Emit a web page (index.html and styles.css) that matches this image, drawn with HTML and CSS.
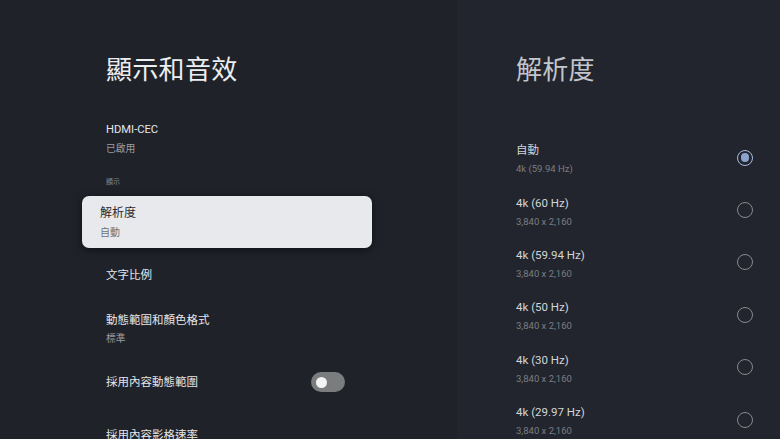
FILE: index.html
```html
<!DOCTYPE html>
<html lang="zh-Hant">
<head>
<meta charset="utf-8">
<title>顯示和音效</title>
<link rel="stylesheet" href="styles.css">
</head>
<body>
<div class="screen">
  <section class="left">
    <h1 class="title">顯示和音效</h1>
    <div class="item hdmi">
      <div class="item-title latin">HDMI-CEC</div>
      <div class="item-sub">已啟用</div>
    </div>
    <div class="header">顯示</div>
    <div class="card">
      <div class="card-title">解析度</div>
      <div class="card-sub">自動</div>
    </div>
    <div class="item scale">
      <div class="item-title">文字比例</div>
    </div>
    <div class="item dyn">
      <div class="item-title">動態範圍和顏色格式</div>
      <div class="item-sub">標準</div>
    </div>
    <div class="item row-toggle">
      <div class="item-title">採用內容動態範圍</div>
      <span class="toggle"><span class="knob"></span></span>
    </div>
    <div class="item frame">
      <div class="item-title">採用內容影格速率</div>
    </div>
  </section>
  <section class="right">
    <h2 class="rtitle">解析度</h2>
    <ul class="options">
      <li class="opt">
        <div class="opt-text"><div class="opt-title">自動</div><div class="opt-sub">4k (59.94 Hz)</div></div>
        <span class="radio checked"></span>
      </li>
      <li class="opt">
        <div class="opt-text"><div class="opt-title">4k (60 Hz)</div><div class="opt-sub">3,840 x 2,160</div></div>
        <span class="radio"></span>
      </li>
      <li class="opt">
        <div class="opt-text"><div class="opt-title">4k (59.94 Hz)</div><div class="opt-sub">3,840 x 2,160</div></div>
        <span class="radio"></span>
      </li>
      <li class="opt">
        <div class="opt-text"><div class="opt-title">4k (50 Hz)</div><div class="opt-sub">3,840 x 2,160</div></div>
        <span class="radio"></span>
      </li>
      <li class="opt">
        <div class="opt-text"><div class="opt-title">4k (30 Hz)</div><div class="opt-sub">3,840 x 2,160</div></div>
        <span class="radio"></span>
      </li>
      <li class="opt">
        <div class="opt-text"><div class="opt-title">4k (29.97 Hz)</div><div class="opt-sub">3,840 x 2,160</div></div>
        <span class="radio"></span>
      </li>
    </ul>
  </section>
</div>
</body>
</html>
```
FILE: styles.css
```css
* { box-sizing: border-box; }
html, body { margin: 0; padding: 0; }
body {
  width: 780px;
  height: 439px;
  overflow: hidden;
  background: #22252d;
  font-family: Roboto, "Noto Sans CJK TC", "Noto Sans", sans-serif;
}
.screen {
  display: flex;
  width: 780px;
  height: 439px;
}
.left {
  width: 457px;
  height: 439px;
  background: #1f2229;
  padding: 52px 0 0 106px;
  overflow: hidden;
}
.title {
  margin: 0;
  font-size: 26px;
  line-height: 36px;
  font-weight: 400;
  color: #eceef1;
  letter-spacing: 0.3px;
}
.item { position: relative; width: 240px; }
.item-title {
  font-size: 11.5px;
  line-height: 18px;
  color: #e4e6e9;
}
.latin { font-size: 11.2px; }
.item-sub {
  margin-top: 3px;
  font-size: 9.8px;
  line-height: 14px;
  color: #9a9da3;
}
.hdmi { margin-top: 33px; }
.header {
  margin-top: 21px;
  font-size: 7px;
  line-height: 10px;
  color: #868990;
}
.card {
  margin: 9px 0 0 -24px;
  width: 290px;
  height: 52px;
  padding: 8px 18px;
  background: #e8e9ec;
  border-radius: 7px;
  box-shadow: 0 2px 10px rgba(0,0,0,0.5);
}
.card-title {
  font-size: 12px;
  line-height: 18px;
  color: #2a2c31;
}
.card-sub {
  margin-top: 4px;
  font-size: 10px;
  line-height: 14px;
  color: #6e7177;
}
.scale { margin-top: 18px; }
.dyn { margin-top: 27px; }
.row-toggle {
  margin-top: 26px;
  display: flex;
  align-items: center;
  width: 239px;
  justify-content: space-between;
}
.frame { margin-top: 34px; }
.toggle {
  display: flex;
  align-items: center;
  width: 34px;
  height: 20px;
  border-radius: 10px;
  background: #7b7c7e;
  padding-left: 5px;
}
.knob {
  width: 11px;
  height: 11px;
  border-radius: 50%;
  background: #f4f4f4;
}
.right {
  flex: 1;
  padding: 52px 27px 0 59px;
  overflow: hidden;
}
.rtitle {
  margin: 0;
  font-size: 26px;
  line-height: 36px;
  font-weight: 400;
  color: #c3c6cc;
  letter-spacing: 0.3px;
}
.options {
  list-style: none;
  margin: 53px 0 0;
  padding: 0;
}
.opt {
  display: flex;
  justify-content: space-between;
  align-items: center;
  height: 52.4px;
}
.opt-title {
  font-size: 11.5px;
  line-height: 18px;
  color: #d3d5d9;
}
.opt-sub {
  margin-top: 3px;
  font-size: 9.5px;
  line-height: 14px;
  color: #7b7e84;
}
.opt-text { padding-bottom: 17px; }
.radio {
  width: 16px;
  height: 16px;
  border-radius: 50%;
  border: 1.6px solid #86898e;
  margin-bottom: 19px;
  display: flex;
  align-items: center;
  justify-content: center;
}
.radio.checked {
  border-color: #a9bbdd;
}
.radio.checked::after {
  content: "";
  width: 8.5px;
  height: 8.5px;
  border-radius: 50%;
  background: #8ca3cd;
}
```
